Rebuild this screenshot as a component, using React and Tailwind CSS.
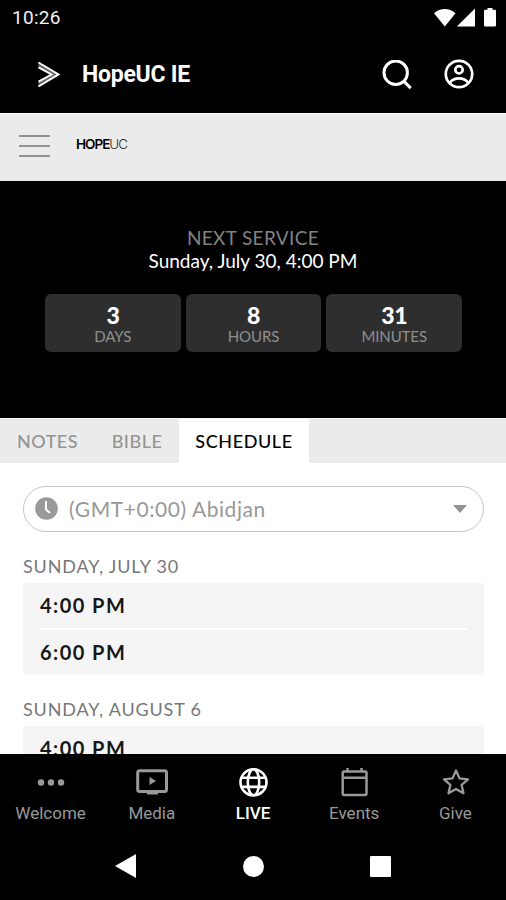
import React from 'react';

const countdown = [
  { value: '3', label: 'DAYS' },
  { value: '8', label: 'HOURS' },
  { value: '31', label: 'MINUTES' },
];

const schedule = [
  { day: 'SUNDAY, JULY 30', times: ['4:00 PM', '6:00 PM'] },
  { day: 'SUNDAY, AUGUST 6', times: ['4:00 PM'] },
];

function StatusBar() {
  return (
    <div className="flex h-[36px] items-center justify-between bg-black pl-3 pr-[9px] text-white">
      <span className="text-[19px] leading-[36px] tracking-[0.3px] text-[#f2f2f2]">10:26</span>
      <svg width="63" height="20" viewBox="0 0 63 20" fill="currentColor">
        <path d="M0 5.3C6-.6 15.500-.6 21.500 5.300L10.800 18.500Z" />
        <path d="M41 .5v18H22.800Z" />
        <path d="M53.500 0h5v1.800h2.200c.8 0 1.300.5 1.300 1.200v14.200c0 .8-.5 1.300-1.300 1.300h-9.400c-.8 0-1.300-.5-1.300-1.300V3c0-.7.500-1.200 1.300-1.200h2.200Z" />
      </svg>
    </div>
  );
}

function AppBar() {
  return (
    <header className="flex h-[77px] items-center bg-black pl-[37px] pr-[32px] text-white">
      <svg width="24" height="28" viewBox="0 0 24 28" fill="none" stroke="currentColor" strokeWidth="1.900">
        <path d="M1.500 1.500 21.500 12.500v2L1.500 25.500v-5L13.500 13.500 1.500 6.500Z" fill="#666" stroke="none" />
        <path d="M1.500 1.500 21.500 13.400 1.500 25.500" />
        <path d="M1.500 6.300 14.500 13.500 1.500 20.700" />
      </svg>
      <h1 className="ml-[21px] text-[23px] font-bold leading-[30px] tracking-[-0.25px]">HopeUC IE</h1>
      <div className="ml-auto flex items-center gap-[32px]">
        <svg width="30" height="30" viewBox="0 0 30 30" fill="none" stroke="currentColor" strokeWidth="3">
          <circle cx="13.700" cy="12.700" r="11.700" />
          <path d="M21.500 20.900 28.700 28.100" />
        </svg>
        <svg width="30" height="30" viewBox="0 0 30 30" fill="none" stroke="currentColor" strokeWidth="2.700" className="mb-px">
          <circle cx="15" cy="15" r="13.200" />
          <circle cx="15" cy="10.800" r="3.700" />
          <path d="M5.800 23.600C8 20.700 11.300 19.300 15 19.300s7 1.400 9.200 4.300" />
        </svg>
      </div>
    </header>
  );
}

function SiteBar() {
  return (
    <div className="flex h-[68px] items-center border-t border-white bg-[#ebebeb] pl-[19px]">
      <div className="mb-[3px] flex w-[31px] flex-col gap-2">
        <span className="h-0.5 bg-[#929292]" />
        <span className="h-0.5 bg-[#929292]" />
        <span className="h-0.5 bg-[#929292]" />
      </div>
      <div className="mb-[7px] ml-[26px] font-[Inter] text-[13.5px] leading-4 text-black">
        <span className="font-semibold tracking-[-1px]">HOPE</span>
        <span className="font-light tracking-[-0.9px] text-[#333]">UC</span>
      </div>
    </div>
  );
}

function Countdown() {
  return (
    <section className="h-[237px] bg-black pt-[45px] text-center">
      <p className="text-[19px] leading-6 tracking-[0.35px] text-[#828282]">NEXT SERVICE</p>
      <p className="text-[19px] leading-[22px] text-white">Sunday, July 30, 4:00 PM</p>
      <div className="ml-[45px] mr-[44px] mt-[22px] grid grid-cols-3 gap-[5px]">
        {countdown.map(c => (
          <div key={c.label} className="flex h-[58px] flex-col items-center rounded-md bg-[#2e2e2e] pt-[9px]">
            <span className="text-[23px] font-black leading-[24px] tracking-[-0.5px] text-white">{c.value}</span>
            <span className="text-[15px] leading-[18px] tracking-[-0.1px] text-[#8f8f8f]">{c.label}</span>
          </div>
        ))}
      </div>
    </section>
  );
}

function Tabs() {
  return (
    <nav className="flex h-[45px] border-t border-[#f5f5f5] bg-[#ebebeb] text-[18px] font-medium leading-[45px]">
      <button className="w-[95px] tracking-[0.5px] text-[#949494]">NOTES</button>
      <button className="w-[84px] tracking-[0.5px] text-[#949494]">BIBLE</button>
      <button className="w-[130px] bg-white tracking-[0.6px] text-black">SCHEDULE</button>
    </nav>
  );
}

function TimezoneSelect() {
  return (
    <div className="flex h-[46px] items-center rounded-full border border-[#c4c4c4] pl-3 pr-4 text-[#999]">
      <svg width="23" height="23" viewBox="0 0 23 23" className="-ml-px mb-px">
        <circle cx="11.500" cy="11.500" r="11.300" fill="#999" />
        <path d="M11 4v8.500l4 3.500" fill="none" stroke="#fff" strokeWidth="2" />
      </svg>
      <span className="ml-[11px] text-[21px] leading-[44px] tracking-[0.57px]">(GMT+0:00) Abidjan</span>
      <svg width="14" height="8" viewBox="0 0 14 8" className="ml-auto">
        <path d="M0 0h14L7 8Z" fill="#929292" />
      </svg>
    </div>
  );
}

function Schedule() {
  return (
    <div>
      {schedule.map(s => (
        <section key={s.day} className="pt-[22px]">
          <h2 className="h-[29px] text-[18px] leading-6 tracking-[0.85px] text-[#777]">{s.day}</h2>
          <ul className="h-[92px] rounded bg-[#f5f5f5] px-[17px] text-[20px] font-bold tracking-[1.45px] text-[#181818]">
            {s.times.map((t, i) => (
              <li key={t} className={i > 0 ? 'border-t-2 border-white leading-[44px]' : 'leading-[45px]'}>{t}</li>
            ))}
          </ul>
        </section>
      ))}
    </div>
  );
}

const icons = {
  Welcome: (
    <g fill="currentColor">
      <circle cx="6" cy="16.500" r="3.200" />
      <circle cx="16" cy="16.500" r="3.200" />
      <circle cx="26" cy="16.500" r="3.200" />
    </g>
  ),
  Media: (
    <g fill="none" stroke="currentColor" strokeWidth="3">
      <rect x="1.700" y="4.700" width="28.800" height="20.800" rx="2" />
      <path d="M11 27h11" />
      <path d="m13.500 11 6.500 4-6.500 4Z" fill="currentColor" stroke="none" />
    </g>
  ),
  LIVE: (
    <g fill="none" stroke="currentColor" strokeWidth="2.600">
      <circle cx="16.500" cy="16.300" r="13" />
      <ellipse cx="16.500" cy="16.300" rx="5.700" ry="13" />
      <path d="M4.500 11.700h24M4.500 20.900h24" />
    </g>
  ),
  Events: (
    <g fill="none" stroke="currentColor" strokeWidth="2.500">
      <rect x="4.700" y="5.500" width="23.800" height="23.500" rx="1.500" />
      <path d="M4.500 11.700h24M9.500 2v4M23.500 2v4" />
    </g>
  ),
  Give: (
    <path
      d="m17 4.500 3.500 7.900 8.500.9-6.400 5.600 1.900 8.300-7.500-4.300L9.500 27.200l1.900-8.300L5 13.300l8.500-.9Z"
      fill="none"
      stroke="currentColor"
      strokeWidth="2.300"
      strokeLinejoin="round"
    />
  ),
};

function BottomNav() {
  return (
    <nav className="flex h-[78px] shrink-0 bg-black">
      {Object.keys(icons).map(name => (
        <button key={name} className={`flex flex-1 flex-col items-center pt-3 ${name === 'LIVE' ? 'font-medium text-white' : 'text-[#999]'}`}>
          <svg width="32" height="32" viewBox="0 0 32 32">{icons[name]}</svg>
          <span className="mt-1 text-[17px] leading-[22px]">{name}</span>
        </button>
      ))}
    </nav>
  );
}

function SystemNav() {
  return (
    <div className="flex h-[68px] items-center justify-between bg-black pl-[115px] pr-[115px]">
      <svg width="21" height="24" viewBox="0 0 21 24" fill="#fff"><path d="M21 0v24L0 12Z" /></svg>
      <span className="size-[21px] rounded-full bg-white" />
      <span className="size-[21px] rounded-[1px] bg-white" />
    </div>
  );
}

export default function App() {
  return (
    <div className="flex h-[900px] w-[506px] flex-col overflow-hidden bg-white font-[Roboto,sans-serif]">
      <StatusBar />
      <AppBar />
      <SiteBar />
      <main className="h-[573px] shrink-0 overflow-hidden font-[Lato,sans-serif]">
        <Countdown />
        <Tabs />
        <div className="pl-[23px] pr-[22px] pt-[23px]">
          <TimezoneSelect />
          <Schedule />
        </div>
      </main>
      <BottomNav />
      <SystemNav />
    </div>
  );
}
